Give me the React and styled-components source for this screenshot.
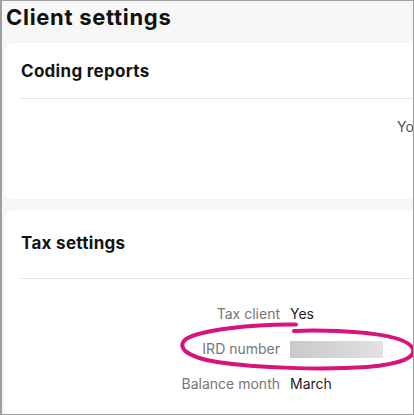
import React from "react";
import styled, { createGlobalStyle } from "styled-components";

const GlobalStyle = createGlobalStyle`
  html, body {
    margin: 0;
    padding: 0;
    background: #ffffff;
  }
  * {
    box-sizing: border-box;
  }
`;

const taxRows = [
  { label: "Tax client", value: "Yes" },
  { label: "IRD number", hidden: true },
  { label: "Balance month", value: "March" },
];

function App() {
  return (
    <Frame>
      <GlobalStyle />
      <Title>Client settings</Title>
      <Cards>
        <Card>
          <CardHeader $height={55}>
            <CardTitle>Coding reports</CardTitle>
          </CardHeader>
          <Divider />
          <CardBody $height={100}>
            <Message>You haven't set up any coding reports yet</Message>
          </CardBody>
        </Card>
        <Card>
          <CardHeader $height={68} $padBottom={2}>
            <CardTitle>Tax settings</CardTitle>
          </CardHeader>
          <Divider />
          <Rows>
            {taxRows.map((row) => (
              <React.Fragment key={row.label}>
                <Label>{row.label}</Label>
                {row.hidden ? <Redacted /> : <Value>{row.value}</Value>}
              </React.Fragment>
            ))}
          </Rows>
        </Card>
      </Cards>
      <Circle viewBox="0 0 414 415" aria-hidden="true">
        <path
          d="M 294 323.5 C 250 323, 198 329, 184 338 C 174 346, 184 356, 215 361 C 255 367, 320 369, 365 366 C 400 363, 414 356, 411 348 C 407 338, 380 332, 336 330 C 318 329.5, 302 329.5, 292 330"
          fill="none"
          stroke="#d8137c"
          strokeWidth="4"
          strokeLinecap="round"
        />
      </Circle>
    </Frame>
  );
}

export default App;

const Frame = styled.div`
  position: relative;
  width: 414px;
  height: 415px;
  overflow: hidden;
  background: #f7f7f7;
  border: 1px solid #9f9f9f;
  border-left-width: 2px;
  font-family: Inter, "Liberation Sans", sans-serif;
`;

const Title = styled.h1`
  margin: 0;
  padding: 3px 0 0 4px;
  height: 42px;
  font-size: 22px;
  font-weight: 700;
  letter-spacing: 0.7px;
  color: #111111;
`;

const Cards = styled.div`
  display: flex;
  flex-direction: column;
  gap: 11px;
  padding-left: 3px;
`;

const Card = styled.section`
  width: 460px;
  background: #ffffff;
  border-radius: 8px;
  box-shadow: 0 0 2px rgba(0, 0, 0, 0.04);
`;

const CardHeader = styled.div`
  display: flex;
  align-items: center;
  height: ${(p) => p.$height}px;
  padding: 0 16px ${(p) => p.$padBottom || 0}px;
`;

const CardTitle = styled.h2`
  margin: 0;
  font-size: 17px;
  font-weight: 700;
  letter-spacing: 0.3px;
  color: #141414;
`;

const Divider = styled.hr`
  margin: 0 0 0 16px;
  border: none;
  height: 1px;
  background: #e4e4e4;
`;

const CardBody = styled.div`
  height: ${(p) => p.$height}px;
  padding: 17px 0 0 392px;
  white-space: nowrap;
`;

const Message = styled.span`
  font-size: 14px;
  color: #555555;
`;

const Rows = styled.div`
  display: grid;
  grid-template-columns: 259px 1fr;
  column-gap: 10px;
  row-gap: 15px;
  align-items: center;
  padding: 25px 16px 40px;
  font-size: 14px;
  line-height: 20px;
`;

const Label = styled.span`
  text-align: right;
  color: #767676;
`;

const Value = styled.span`
  color: #1c1c1c;
`;

const Redacted = styled.span`
  display: block;
  width: 93px;
  height: 17px;
  background: linear-gradient(90deg, #c9c9c9 0%, #d6d6d6 55%, #e2e2e2 100%);
  filter: blur(0.6px);
`;

const Circle = styled.svg`
  position: absolute;
  top: 0;
  left: 0;
  width: 414px;
  height: 415px;
  pointer-events: none;
`;
